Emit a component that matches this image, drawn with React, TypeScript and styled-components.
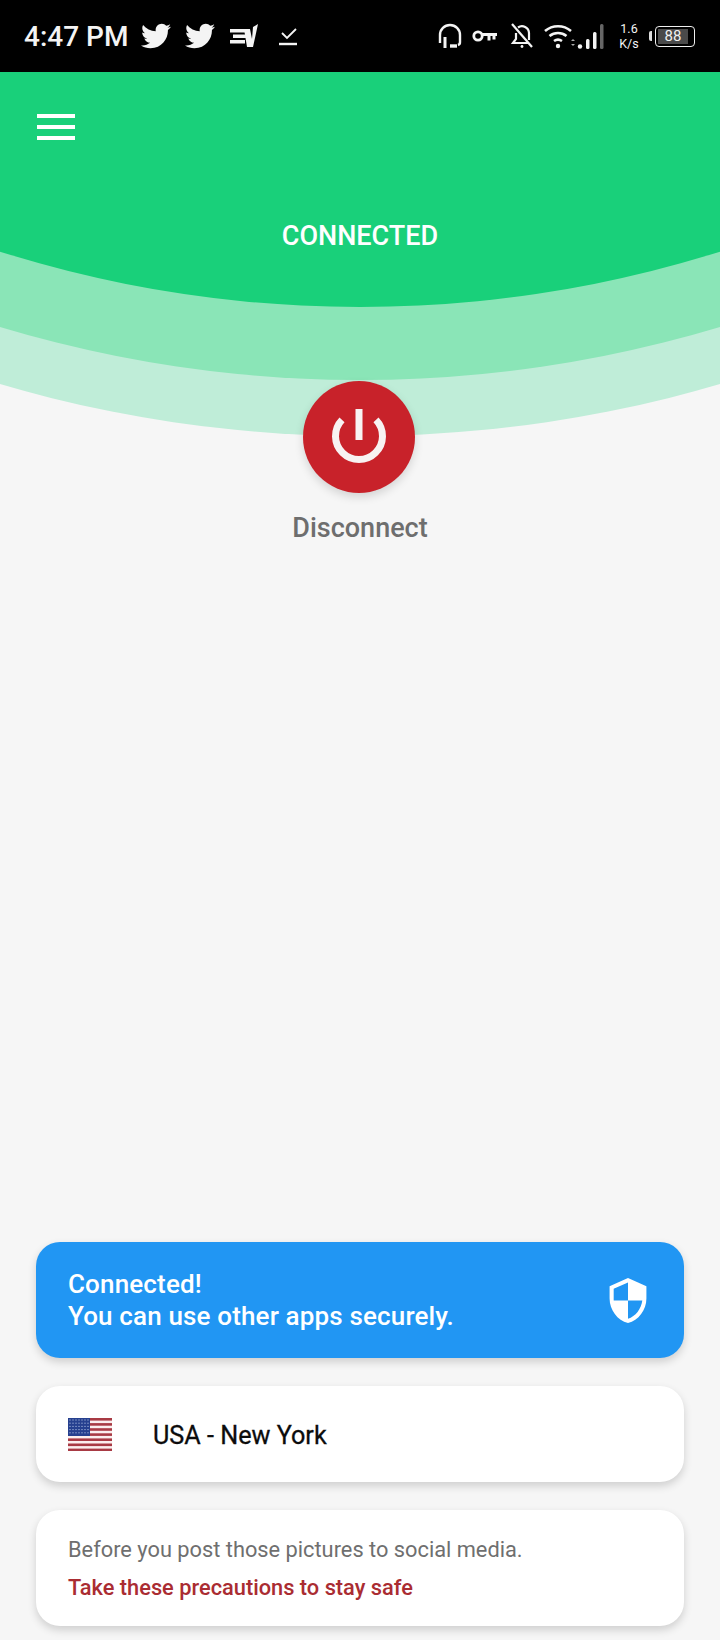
import React from 'react'
import styled, { createGlobalStyle } from 'styled-components'
import { FaTwitter } from 'react-icons/fa'

const GlobalStyle = createGlobalStyle`
  html, body {
    margin: 0;
    padding: 0;
    background: #f6f6f6;
    font-family: Roboto, "Liberation Sans", sans-serif;
  }
`

const Page = styled.div`
  width: 720px;
  height: 1640px;
  display: flex;
  flex-direction: column;
  overflow: hidden;
  background: #f6f6f6;
`

const StatusBar = styled.div`
  height: 72px;
  flex: none;
  background: #000;
  color: #f4f4f4;
  display: flex;
  align-items: center;
  justify-content: space-between;
  padding: 0 25px 0 24px;
  box-sizing: border-box;
`

const StatusGroup = styled.div`
  display: flex;
  align-items: center;
`

const Clock = styled.span`
  font-size: 28px;
  font-weight: 500;
  margin-right: 14px;
  width: 103px;
  white-space: nowrap;
`

const Speed = styled.span`
  font-size: 12.5px;
  line-height: 15px;
  text-align: center;
  width: 26px;
  margin: 0 13px 0 11px;
`

const Glyph = styled.svg<{ $gap?: number }>`
  display: block;
  flex: none;
  margin-right: ${(p) => p.$gap ?? 0}px;
`

const Bird = styled(FaTwitter)<{ $gap: number }>`
  display: block;
  flex: none;
  width: 30px;
  height: 30px;
  margin-right: ${(p) => p.$gap}px;
`

const Battery = styled.div`
  position: relative;
  width: 40px;
  height: 21px;
  box-sizing: border-box;
  border: 1.5px solid #eee;
  border-radius: 4px;
  padding: 2px;
  &::before {
    content: '';
    position: absolute;
    left: -7px;
    top: 4px;
    width: 3px;
    height: 10px;
    background: #ddd;
    border-radius: 2px 0 0 2px;
  }
`

const BatteryFill = styled.div`
  height: 100%;
  width: 30px;
  background: #4a4a4a;
  color: #f2f2f2;
  font-size: 15px;
  line-height: 14px;
  text-align: center;
`

const Hero = styled.div`
  position: relative;
  flex: none;
  height: 500px;
  display: flex;
  flex-direction: column;
  align-items: center;
`

const Waves = styled.svg`
  position: absolute;
  left: 0;
  top: 0;
  z-index: 0;
`

const MenuButton = styled.div`
  position: relative;
  align-self: flex-start;
  margin: 42px 0 0 37px;
  width: 38px;
  display: flex;
  flex-direction: column;
  gap: 7.5px;
`

const MenuLine = styled.span`
  display: block;
  height: 3.5px;
  background: #fff;
`

const Status = styled.div`
  position: relative;
  margin-top: 79px;
  color: #fff;
  font-size: 27px;
  line-height: 34px;
  font-weight: 500;
`

const PowerButton = styled.div`
  position: relative;
  margin: 128px 2px 0 0;
  width: 112px;
  height: 112px;
  border-radius: 50%;
  background: #c8222a;
  box-shadow: 0 4px 10px rgba(0, 0, 0, 0.14);
  display: flex;
  align-items: center;
  justify-content: center;
`

const PowerLabel = styled.div`
  position: relative;
  margin-top: 18px;
  color: #6e6e6e;
  font-size: 27px;
  line-height: 34px;
  font-weight: 500;
`

const Cards = styled.div`
  margin-top: auto;
  padding: 0 36px 14px;
  display: flex;
  flex-direction: column;
  gap: 28px;
`

const Card = styled.div<{ $height: number; $bg?: string }>`
  height: ${(p) => p.$height}px;
  box-sizing: border-box;
  background: ${(p) => p.$bg ?? '#fff'};
  border-radius: 24px;
  box-shadow: 0 4px 8px rgba(0, 0, 0, 0.16);
  padding: 0 32px;
  display: flex;
  align-items: center;
`

const Notice = styled.div`
  flex: 1;
  color: #fff;
  font-size: 26px;
  line-height: 32px;
  font-weight: 500;
  letter-spacing: 0.15px;
`

const ShieldIcon = styled.svg`
  display: block;
  flex: none;
  margin-right: 5px;
`

const Country = styled.div`
  margin-left: 41px;
  padding-top: 2px;
  color: #0c0c0c;
  font-size: 25.2px;
  font-weight: 400;
  -webkit-text-stroke: 0.3px #0c0c0c;
`

const Tips = styled.div`
  display: flex;
  flex-direction: column;
  gap: 12px;
  padding-top: 2px;
`

const TipText = styled.div`
  color: #6f6f6f;
  font-size: 21.8px;
  line-height: 26px;
`

const TipLink = styled.div`
  color: #aa2c32;
  font-size: 21.8px;
  line-height: 26px;
  font-weight: 500;
`

const Flag = () => {
  const stripes = [0, 1, 2, 3, 4, 5, 6]
  const stars: React.ReactElement[] = []
  for (let r = 0; r < 5; r++) {
    for (let c = 0; c < 7; c++) {
      stars.push(<rect key={`${r}-${c}`} x={1.5 + c * 3} y={1.5 + r * 3.2} width="1" height="1" fill="#c6d3f0" />)
    }
  }
  return (
    <Glyph width="44" height="33" viewBox="0 0 44 33">
      <rect width="44" height="33" fill="#fbeeee" />
      {stripes.map((i) => (
        <rect key={i} y={i * 5.1} width="44" height="2.6" fill="#a83a44" />
      ))}
      <rect width="22" height="18" fill="#26408f" />
      {stars}
    </Glyph>
  )
}

export default function App() {
  return (
    <Page>
      <GlobalStyle />
      <StatusBar>
        <StatusGroup>
          <Clock>4:47 PM</Clock>
          <Bird $gap={14} />
          <Bird $gap={14} />
          <Glyph $gap={19} width="30" height="24" viewBox="0 0 30 24" fill="#f4f4f4">
            <rect x="1" y="5" width="17" height="3.5" />
            <rect x="4" y="10.5" width="13" height="3.5" />
            <rect x="1" y="16" width="15" height="3.5" />
            <polygon points="15,5 21,5 23,15 24,3 29,0 24,23 18,23" />
          </Glyph>
          <Glyph width="20" height="22" viewBox="0 0 20 22" fill="none" stroke="#f4f4f4">
            <path d="M4 8l5 5 9-9" strokeWidth="1.8" />
            <path d="M1 19h18" strokeWidth="2.4" />
          </Glyph>
        </StatusGroup>
        <StatusGroup>
          <Glyph $gap={9} width="26" height="26" viewBox="0 0 26 26" fill="none" stroke="#f4f4f4" strokeWidth="2.4">
            <path d="M3 20V12a10 10 0 0 1 20 0v7a3 3 0 0 1-2 3" />
            <path d="M8 14v11" strokeWidth="3" />
            <path d="M13 23h7" strokeWidth="3.4" />
          </Glyph>
          <Glyph $gap={12} width="26" height="14" viewBox="0 0 26 14" fill="none" stroke="#f4f4f4">
            <circle cx="6" cy="7" r="4.2" strokeWidth="2.8" />
            <path d="M10 5.500h15M17 5.500v6M22 5.500v5" strokeWidth="3" />
          </Glyph>
          <Glyph $gap={9} width="24" height="26" viewBox="0 0 24 26" fill="none" stroke="#f4f4f4" strokeWidth="2.2">
            <path d="M2 1l20 23" />
            <path d="M6 10v6l-3 4h15M8 4.500A7 7 0 0 1 19 10v7" />
            <circle cx="12" cy="23.500" r="1.400" fill="#f4f4f4" stroke="none" />
          </Glyph>
          <Glyph width="62" height="26" viewBox="0 0 62 26" fill="none">
            <path d="M2 8a20 20 0 0 1 26 0M6.500 13a13.500 13.500 0 0 1 17 0M11 18a7 7 0 0 1 8 0" stroke="#f4f4f4" strokeWidth="2.6" />
            <circle cx="15" cy="23" r="2.200" fill="#f4f4f4" />
            <path d="M28 18l2-2 2 2zM28 21l2 2 2-2z" fill="#aaa" />
            <circle cx="37" cy="23.500" r="2.200" fill="#f4f4f4" />
            <rect x="43" y="16" width="3.500" height="10" rx="1.500" fill="#f4f4f4" />
            <rect x="50" y="9" width="3.500" height="17" rx="1.500" fill="#f4f4f4" />
            <rect x="57" y="1" width="3.500" height="25" rx="1.500" fill="#666" />
          </Glyph>
          <Speed>
            1.6
            <br />
            K/s
          </Speed>
          <Battery>
            <BatteryFill>88</BatteryFill>
          </Battery>
        </StatusGroup>
      </StatusBar>
      <Hero>
        <Waves width="720" height="400" viewBox="0 0 720 400">
          <circle cx="360" cy="-908" r="1272" fill="#bfedd8" />
          <circle cx="360" cy="-941" r="1249" fill="#8ae5b7" />
          <circle cx="360" cy="-965" r="1200" fill="#19d07a" />
        </Waves>
        <MenuButton>
          <MenuLine />
          <MenuLine />
          <MenuLine />
        </MenuButton>
        <Status>CONNECTED</Status>
        <PowerButton>
          <svg width="60" height="58" viewBox="0 0 60 58" fill="none" stroke="#f8f2f2" strokeWidth="7">
            <path d="M13 11.800a23.500 23.500 0 1 0 34 0" />
            <path d="M30 1v31" />
          </svg>
        </PowerButton>
        <PowerLabel>Disconnect</PowerLabel>
      </Hero>
      <Cards>
        <Card $height={116} $bg="#2196f3">
          <Notice>
            Connected!
            <br />
            You can use other apps securely.
          </Notice>
          <ShieldIcon width="38" height="45" viewBox="3 1 18 22" fill="#fff">
            <path d="M12 1L3 5v6c0 5.550 3.840 10.740 9 12 5.160-1.260 9-6.450 9-12V5l-9-4zm0 10.990h7c-.53 4.120-3.280 7.790-7 8.940V12H5V6.300l7-3.110v8.800z" />
          </ShieldIcon>
        </Card>
        <Card $height={96}>
          <Flag />
          <Country>USA - New York</Country>
        </Card>
        <Card $height={116}>
          <Tips>
            <TipText>Before you post those pictures to social media.</TipText>
            <TipLink>Take these precautions to stay safe</TipLink>
          </Tips>
        </Card>
      </Cards>
    </Page>
  )
}
